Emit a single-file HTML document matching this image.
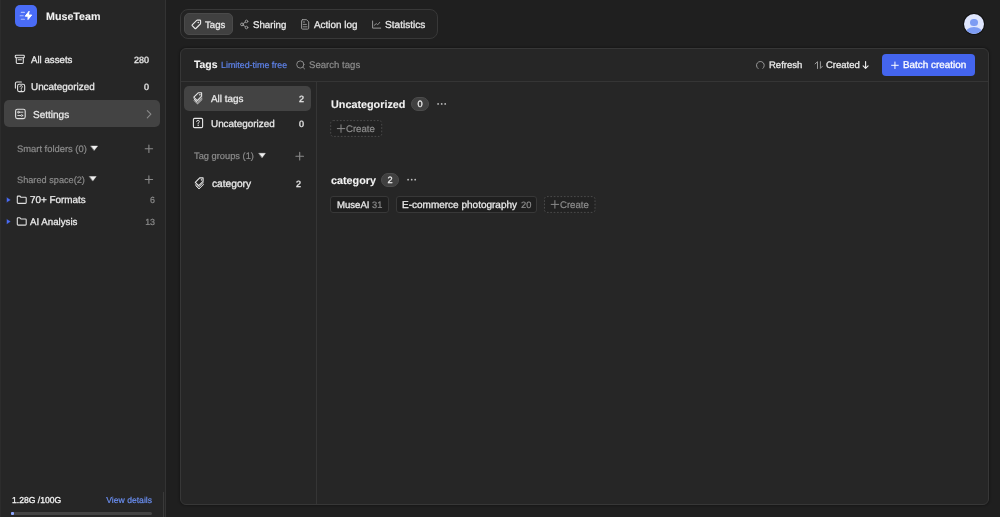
<!DOCTYPE html>
<html><head><meta charset="utf-8">
<style>
*{margin:0;padding:0;box-sizing:border-box}
html,body{width:1000px;height:517px;overflow:hidden;background:#1f1f1f;font-family:"Liberation Sans",sans-serif;color:#e6e6e6}
.a{position:absolute}
.t{position:absolute;white-space:nowrap;line-height:1;will-change:transform;text-rendering:geometricPrecision}
svg{position:absolute;overflow:visible}
</style></head><body>

<div class="a" style="left:0;top:0;width:166px;height:517px;background:#262626;border-right:1px solid #333"></div>
<div class="a" style="left:0;top:0;width:1px;height:517px;background:#2c2c2c"></div>
<div class="a" style="left:15px;top:5px;width:22px;height:21.5px;border-radius:5px;background:#4a6cf6"></div>
<div class="a" style="left:4px;top:100px;width:156px;height:27.4px;border-radius:5px;background:#434343"></div>
<div class="a" style="left:11px;top:512px;width:141px;height:3px;background:#444;border-radius:2px"></div>
<div class="a" style="left:11px;top:512px;width:2.5px;height:3px;background:#8fa8ff;border-radius:1px"></div>
<div class="a" style="left:163px;top:492px;width:1px;height:25px;background:#3a3a3a"></div>

<div class="a" style="left:180px;top:9px;width:258px;height:30px;border:1px solid #383838;border-radius:8px;background:#232323"></div>
<div class="a" style="left:184px;top:13px;width:49px;height:22px;border-radius:5px;background:#404040;border:1px solid #4a4a4a"></div>

<div class="a" style="left:963px;top:13px;width:22px;height:22px;border-radius:50%;background:#111"></div>
<div class="a" style="left:964px;top:14px;width:20px;height:20px;border-radius:50%;background:#dfe6fd;overflow:hidden">
  <div class="a" style="left:6.3px;top:4.6px;width:7.4px;height:7.4px;border-radius:50%;background:#7d9cf3"></div>
  <div class="a" style="left:1px;top:13px;width:18px;height:14px;border-radius:50%;background:#7d9cf3"></div>
</div>

<div class="a" style="left:179.6px;top:48px;width:809.4px;height:457px;background:#262626;border:1px solid #373737;border-radius:6px;box-shadow:0 0 2px 1px rgba(0,0,0,0.25)"></div>
<div class="a" style="left:181px;top:81px;width:807px;height:1px;background:#353535"></div>
<div class="a" style="left:316px;top:82px;width:1px;height:422px;background:#353535"></div>

<div class="a" style="left:882px;top:54px;width:93px;height:22px;border-radius:4px;background:#4465ee"></div>
<div class="a" style="left:184px;top:86.3px;width:127px;height:24.5px;border-radius:5px;background:#434343"></div>

<div class="a" style="left:411px;top:97px;width:18px;height:14px;border-radius:7px;background:#404040;border:1px solid #4c4c4c"></div>
<div class="a" style="left:381px;top:173px;width:18px;height:14px;border-radius:7px;background:#404040;border:1px solid #4c4c4c"></div>
<svg class="a" style="left:0;top:0" width="1000" height="517"><rect x="330.7" y="120.6" width="51" height="15.8" rx="2.5" fill="#222" stroke="#4a4a4a" stroke-width="1" stroke-dasharray="1.7 1.67"/><rect x="544.5" y="196.6" width="50.5" height="15.8" rx="2.5" fill="#222" stroke="#4a4a4a" stroke-width="1" stroke-dasharray="1.7 1.67"/></svg>
<div class="a" style="left:330px;top:196px;width:59px;height:17px;border:1px solid #383838;border-radius:3px;background:#1f1f1f"></div>
<div class="a" style="left:396px;top:196px;width:141px;height:17px;border:1px solid #383838;border-radius:3px;background:#1f1f1f"></div>

<div class="t" style="top:12px;font-size:10.7px;font-weight:700;color:#f2f2f2;-webkit-text-stroke:0.1px #f2f2f2;left:45.6px;">MuseTeam</div>
<div class="t" style="top:56px;font-size:9.7px;font-weight:400;color:#e8e8e8;-webkit-text-stroke:0.3px #e8e8e8;left:31.3px;">All assets</div>
<div class="t" style="top:56px;font-size:9.0px;font-weight:400;color:#e8e8e8;-webkit-text-stroke:0.3px #e8e8e8;left:-51.19999999999999px;width:200px;text-align:right;">280</div>
<div class="t" style="top:83px;font-size:9.9px;font-weight:400;color:#e8e8e8;-webkit-text-stroke:0.3px #e8e8e8;left:31.3px;">Uncategorized</div>
<div class="t" style="top:83px;font-size:9.0px;font-weight:400;color:#e8e8e8;-webkit-text-stroke:0.3px #e8e8e8;left:-51.19999999999999px;width:200px;text-align:right;">0</div>
<div class="t" style="top:111px;font-size:10px;font-weight:400;color:#e8e8e8;-webkit-text-stroke:0.3px #e8e8e8;left:32.7px;">Settings</div>
<div class="t" style="top:144px;font-size:9.4px;font-weight:400;color:#8c8c8c;-webkit-text-stroke:0.2px #8c8c8c;left:16.6px;">Smart folders (0)</div>
<div class="t" style="top:176px;font-size:9.2px;font-weight:400;color:#8c8c8c;-webkit-text-stroke:0.2px #8c8c8c;left:16.6px;">Shared space(2)</div>
<div class="t" style="top:196px;font-size:9.9px;font-weight:400;color:#e8e8e8;-webkit-text-stroke:0.3px #e8e8e8;left:30.2px;">70+ Formats</div>
<div class="t" style="top:196px;font-size:8.9px;font-weight:400;color:#8c8c8c;-webkit-text-stroke:0.2px #8c8c8c;left:-45.30000000000001px;width:200px;text-align:right;">6</div>
<div class="t" style="top:218px;font-size:9.7px;font-weight:400;color:#e8e8e8;-webkit-text-stroke:0.3px #e8e8e8;left:30.2px;">AI Analysis</div>
<div class="t" style="top:218px;font-size:8.9px;font-weight:400;color:#8c8c8c;-webkit-text-stroke:0.2px #8c8c8c;left:-45.30000000000001px;width:200px;text-align:right;">13</div>
<div class="t" style="top:496px;font-size:8.6px;font-weight:400;color:#f0f0f0;-webkit-text-stroke:0.3px #f0f0f0;left:11.6px;">1.28G /100G</div>
<div class="t" style="top:496px;font-size:8.6px;font-weight:400;color:#5f84ec;-webkit-text-stroke:0.2px #5f84ec;left:-48px;width:200px;text-align:right;color:#6a8ef0;-webkit-text-stroke-color:#6a8ef0;">View details</div>
<div class="t" style="top:21px;font-size:9.6px;font-weight:400;color:#e8e8e8;-webkit-text-stroke:0.3px #e8e8e8;left:205.1px;">Tags</div>
<div class="t" style="top:21px;font-size:9.7px;font-weight:400;color:#e8e8e8;-webkit-text-stroke:0.3px #e8e8e8;left:252.7px;">Sharing</div>
<div class="t" style="top:21px;font-size:9.9px;font-weight:400;color:#e8e8e8;-webkit-text-stroke:0.3px #e8e8e8;left:314px;">Action log</div>
<div class="t" style="top:21px;font-size:10.1px;font-weight:400;color:#e8e8e8;-webkit-text-stroke:0.3px #e8e8e8;left:385.4px;">Statistics</div>
<div class="t" style="top:61px;font-size:10.4px;font-weight:700;color:#f2f2f2;-webkit-text-stroke:0.1px #f2f2f2;left:194.4px;">Tags</div>
<div class="t" style="top:61px;font-size:8.9px;font-weight:400;color:#5f84ec;-webkit-text-stroke:0.2px #5f84ec;left:221.4px;">Limited-time free</div>
<div class="t" style="top:61px;font-size:9.6px;font-weight:400;color:#8c8c8c;-webkit-text-stroke:0.2px #8c8c8c;left:308.6px;">Search tags</div>
<div class="t" style="top:61px;font-size:9.5px;font-weight:400;color:#e8e8e8;-webkit-text-stroke:0.3px #e8e8e8;left:768.6px;">Refresh</div>
<div class="t" style="top:61px;font-size:9.5px;font-weight:400;color:#e8e8e8;-webkit-text-stroke:0.3px #e8e8e8;left:825.8px;">Created</div>
<div class="t" style="top:61px;font-size:9.9px;font-weight:400;color:#ffffff;-webkit-text-stroke:0.3px #ffffff;left:902.5px;">Batch creation</div>
<div class="t" style="top:95px;font-size:9.9px;font-weight:400;color:#e8e8e8;-webkit-text-stroke:0.3px #e8e8e8;left:210.5px;">All tags</div>
<div class="t" style="top:95px;font-size:9.0px;font-weight:400;color:#e8e8e8;-webkit-text-stroke:0.3px #e8e8e8;left:103.89999999999998px;width:200px;text-align:right;">2</div>
<div class="t" style="top:120px;font-size:9.9px;font-weight:400;color:#e8e8e8;-webkit-text-stroke:0.3px #e8e8e8;left:210.5px;">Uncategorized</div>
<div class="t" style="top:120px;font-size:9.0px;font-weight:400;color:#e8e8e8;-webkit-text-stroke:0.3px #e8e8e8;left:103.89999999999998px;width:200px;text-align:right;">0</div>
<div class="t" style="top:152px;font-size:9.3px;font-weight:400;color:#8c8c8c;-webkit-text-stroke:0.2px #8c8c8c;left:194.4px;">Tag groups (1)</div>
<div class="t" style="top:180px;font-size:10.2px;font-weight:400;color:#e8e8e8;-webkit-text-stroke:0.3px #e8e8e8;left:211.5px;">category</div>
<div class="t" style="top:180px;font-size:9.0px;font-weight:400;color:#e8e8e8;-webkit-text-stroke:0.3px #e8e8e8;left:100.69999999999999px;width:200px;text-align:right;">2</div>
<div class="t" style="top:100px;font-size:10.8px;font-weight:700;color:#f2f2f2;-webkit-text-stroke:0.1px #f2f2f2;left:330.9px;">Uncategorized</div>
<div class="t" style="top:100px;font-size:9.2px;font-weight:400;color:#e8e8e8;-webkit-text-stroke:0.3px #e8e8e8;left:370px;width:100px;text-align:center;">0</div>
<div class="t" style="top:125px;font-size:9.6px;font-weight:400;color:#8c8c8c;-webkit-text-stroke:0.2px #8c8c8c;left:346.1px;">Create</div>
<div class="t" style="top:176px;font-size:10.8px;font-weight:700;color:#f2f2f2;-webkit-text-stroke:0.1px #f2f2f2;left:330.9px;">category</div>
<div class="t" style="top:176px;font-size:9.2px;font-weight:400;color:#e8e8e8;-webkit-text-stroke:0.3px #e8e8e8;left:340px;width:100px;text-align:center;">2</div>
<div class="t" style="top:201px;font-size:9.6px;font-weight:400;color:#e8e8e8;-webkit-text-stroke:0.3px #e8e8e8;left:336.8px;">MuseAI</div>
<div class="t" style="top:201px;font-size:9.3px;font-weight:400;color:#8c8c8c;-webkit-text-stroke:0.2px #8c8c8c;left:372px;">31</div>
<div class="t" style="top:201px;font-size:10px;font-weight:400;color:#e8e8e8;-webkit-text-stroke:0.3px #e8e8e8;left:402.1px;">E-commerce photography</div>
<div class="t" style="top:201px;font-size:9.3px;font-weight:400;color:#8c8c8c;-webkit-text-stroke:0.2px #8c8c8c;left:520.9px;">20</div>
<div class="t" style="top:201px;font-size:9.6px;font-weight:400;color:#8c8c8c;-webkit-text-stroke:0.2px #8c8c8c;left:559.9px;">Create</div>
<svg class="a" style="left:0;top:0" width="1000" height="517" viewBox="0 0 1000 517" fill="none" stroke-linecap="round" stroke-linejoin="round">
 <!-- logo bolt -->
 <path d="M28.9 11.5 L25.2 16.2 H28.1 L28 19.5 L31.7 15 H28.8 Z" fill="#fff" stroke="#fff" stroke-width="1"/>
 <path d="M21.3 12.4 H24.4 M20.1 15.8 H23.2 M21.3 19.2 H24.4" stroke="#fff" stroke-opacity="0.55" stroke-width="1.1"/>
 <!-- all assets icon -->
 <g stroke="#e0e0e0" stroke-width="1.1">
  <rect x="15.3" y="55.3" width="9" height="2.4" rx="0.8"/>
  <path d="M16.3 57.7 V62.6 Q16.3 63.5 17.2 63.5 H22.4 Q23.3 63.5 23.3 62.6 V57.7"/>
  <path d="M18.2 59.8 H21.4"/>
 </g>
 <!-- uncategorized icon -->
 <g stroke="#e0e0e0" stroke-width="1.1">
  <path d="M21.4 82 H16.8 Q15.4 82 15.4 83.4 V88.1"/>
  <rect x="17.6" y="84.3" width="7.1" height="7.3" rx="1.6"/>
  <path d="M19.9 86.8 Q19.9 85.6 21.1 85.6 Q22.4 85.6 22.4 86.8 Q22.4 87.7 21.2 88.2 V88.9" stroke-width="0.9"/>
  <circle cx="21.2" cy="90.2" r="0.3" fill="#e0e0e0" stroke-width="0.5"/>
 </g>
 <!-- settings icon -->
 <g stroke="#e0e0e0" stroke-width="1.1">
  <rect x="15.6" y="109.2" width="9.6" height="9.4" rx="1.8"/>
  <path d="M18.8 112.2 H22.9 M17.8 115.5 H20.6" stroke-width="0.9"/>
  <circle cx="18.4" cy="112.2" r="0.9" stroke-width="0.8"/>
  <circle cx="21.8" cy="115.5" r="0.9" stroke-width="0.8"/>
 </g>
 <!-- settings chevron -->
 <path d="M147.3 110.6 L150.9 114.2 L147.3 117.8" stroke="#8a8a8a" stroke-width="1.1"/>
 <!-- smart folders triangle + plus -->
 <path d="M91 146 H97.6 L94.3 150.3 Z" fill="#f0f0f0" stroke="#f0f0f0" stroke-width="0.4"/>
 <path d="M145.2 148.8 H152.6 M148.9 145.1 V152.5" stroke="#8a8a8a" stroke-width="1.1"/>
 <path d="M89.6 176.5 H96.2 L92.9 180.8 Z" fill="#f0f0f0" stroke="#f0f0f0" stroke-width="0.4"/>
 <path d="M145.2 179.5 H152.6 M148.9 175.8 V183.2" stroke="#8a8a8a" stroke-width="1.1"/>
 <!-- folder items -->
 <path d="M7 197.7 L10.3 199.9 L7 202.1 Z" fill="#4a6cf7" stroke="#4a6cf7" stroke-width="0.3"/>
 <path d="M17.3 196.8 Q17.3 196.1 18 196.1 H20 L21 197.3 H25.4 Q26.2 197.3 26.2 198.1 V202.6 Q26.2 203.4 25.4 203.4 H18.1 Q17.3 203.4 17.3 202.6 Z" stroke="#e0e0e0" stroke-width="1.1"/>
 <path d="M7 219.4 L10.3 221.6 L7 223.8 Z" fill="#4a6cf7" stroke="#4a6cf7" stroke-width="0.3"/>
 <path d="M17.3 218.5 Q17.3 217.8 18 217.8 H20 L21 219 H25.4 Q26.2 219 26.2 219.8 V224.3 Q26.2 225.1 25.4 225.1 H18.1 Q17.3 225.1 17.3 224.3 Z" stroke="#e0e0e0" stroke-width="1.1"/>

 <!-- tab icons -->
 <g stroke="#e8e8e8" stroke-width="1.1">
  <path d="M192.2 24.9 L196.7 20.4 Q197 20.1 197.4 20.1 H199.9 Q200.6 20.1 200.6 20.8 V23.3 Q200.6 23.7 200.3 24 L195.8 28.5 Q195.4 28.9 195 28.5 L192.2 25.7 Q191.8 25.3 192.2 24.9 Z"/>
  <circle cx="198.2" cy="22.5" r="0.45" fill="#e8e8e8" stroke-width="0.6"/>
 </g>
 <g stroke="#9a9a9a" stroke-width="1">
  <circle cx="242" cy="24.4" r="1.4"/>
  <circle cx="246.5" cy="21.4" r="1.3"/>
  <circle cx="246.5" cy="27.5" r="1.3"/>
  <path d="M243.2 23.6 L245.4 22.1 M243.2 25.2 L245.4 26.7"/>
 </g>
 <g stroke="#9a9a9a" stroke-width="1">
  <path d="M302.6 19.7 H306.6 L308.7 21.9 V28.1 Q308.7 29.1 307.7 29.1 H302.6 Q301.6 29.1 301.6 28.1 V20.7 Q301.6 19.7 302.6 19.7 Z"/>
  <path d="M303.2 22 H304.6 M303.2 24.4 H306.4 M303.2 26.8 H307" stroke-width="0.9"/>
 </g>
 <g stroke="#9a9a9a" stroke-width="1">
  <path d="M372.6 21 V28.1 H380.7"/>
  <path d="M374.2 25.3 L376.3 23.6 L377.7 24.8 L379.8 22.3" stroke-width="0.9"/>
 </g>

 <!-- header icons -->
 <g stroke="#8a8a8a" stroke-width="1">
  <circle cx="300.3" cy="64.5" r="3.6"/>
  <path d="M302.9 67.2 L304.6 68.9"/>
 </g>
 <path d="M758.1 68.6 A3.9 3.9 0 1 1 762.9 68.4" stroke="#999" stroke-width="1"/>
 <g stroke="#9a9a9a" stroke-width="1">
  <path d="M817.5 68.5 V61.7 L815.1 63.9"/>
  <path d="M820.4 61.7 V68.4 L822.4 66.2"/>
 </g>
 <path d="M865.6 61.6 V68.3 M863.1 65.8 L865.6 68.3 L868.1 65.8" stroke="#eee" stroke-width="1.1"/>
 <path d="M891.6 65.3 H898.3 M894.95 62 V68.6" stroke="#fff" stroke-width="1"/>

 <!-- left col icons -->
 <g stroke="#e6e6e6" stroke-width="1.1">
  <path d="M193.8 97.2 L198.2 92.8 H201.6 V96.2 L197.2 100.6 Z"/>
  <circle cx="199.8" cy="94.8" r="0.4" fill="#e6e6e6" stroke-width="0.6"/>
  <path d="M194 99 L197.3 102.3 L201.9 97.8" stroke-width="0.9"/>
  <path d="M194.2 100.6 L197.5 103.9 L202.1 99.4" stroke-width="0.9"/>
 </g>
 <g stroke="#e6e6e6" stroke-width="1.1">
  <rect x="193.4" y="118.4" width="9.2" height="9.2" rx="1.2"/>
  <path d="M196.6 121.6 Q196.6 120.3 198 120.3 Q199.4 120.3 199.4 121.6 Q199.4 122.5 198.1 123.1 V124.1" stroke-width="0.9"/>
  <circle cx="198.1" cy="125.6" r="0.3" fill="#e6e6e6" stroke-width="0.5"/>
 </g>
 <path d="M259 153.3 H265.4 L262.2 157.6 Z" fill="#f0f0f0" stroke="#f0f0f0" stroke-width="0.4"/>
 <path d="M295.9 156.2 H303.5 M299.7 152.4 V160" stroke="#8a8a8a" stroke-width="1.1"/>
 <g stroke="#e6e6e6" stroke-width="1.1">
  <path d="M195.3 182.3 L199.7 177.9 H203.1 V181.3 L198.7 185.7 Z"/>
  <circle cx="201.3" cy="179.9" r="0.4" fill="#e6e6e6" stroke-width="0.6"/>
  <path d="M195.5 184.1 L198.8 187.4 L203.4 182.9" stroke-width="0.9"/>
  <path d="M195.7 185.7 L199 189 L203.6 184.5" stroke-width="0.9"/>
 </g>

 <!-- content -->
 <g fill="#bdbdbd">
  <circle cx="438.1" cy="103.9" r="0.9"/><circle cx="441.7" cy="103.9" r="0.9"/><circle cx="445.2" cy="103.9" r="0.9"/>
  <circle cx="408.1" cy="179.7" r="0.9"/><circle cx="411.7" cy="179.7" r="0.9"/><circle cx="415.2" cy="179.7" r="0.9"/>
 </g>
 <path d="M337.3 128.6 H344.8 M341 124.8 V132.4" stroke="#8a8a8a" stroke-width="1"/>
 <path d="M551.2 204.4 H558.7 M554.9 200.6 V208.2" stroke="#8a8a8a" stroke-width="1"/>
</svg>

</body></html>
